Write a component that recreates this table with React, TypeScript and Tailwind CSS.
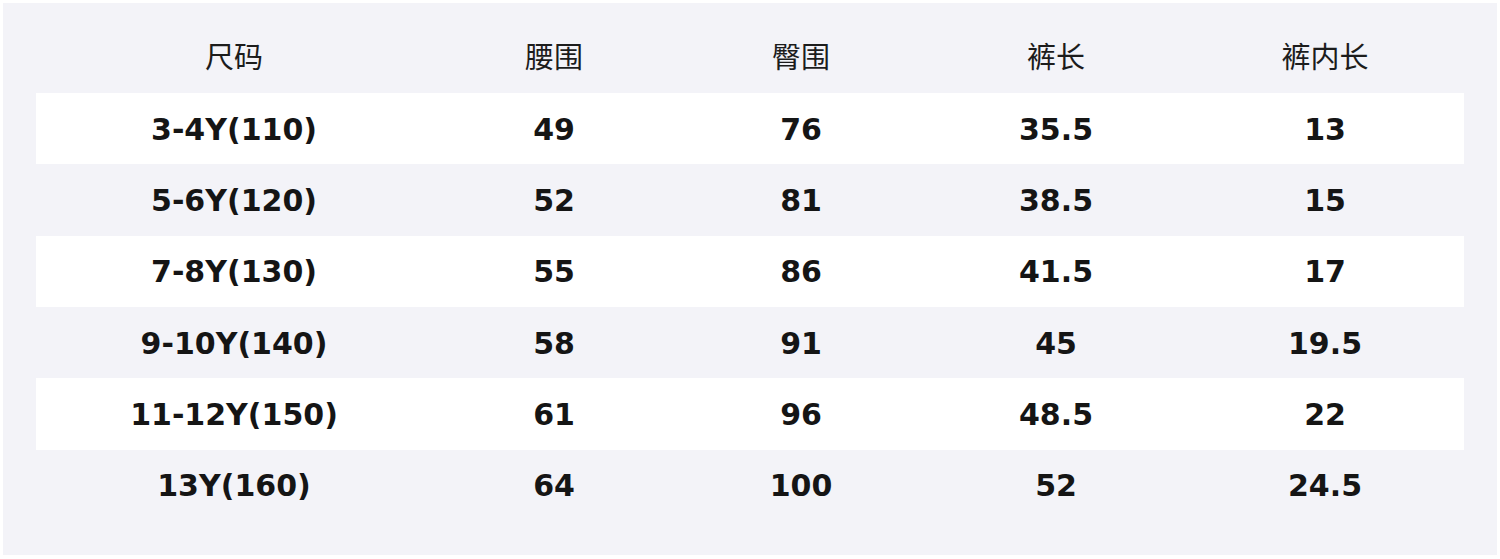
const headers = ["尺码", "腰围", "臀围", "裤长", "裤内长"];

const rows = [
  ["3-4Y(110)", "49", "76", "35.5", "13"],
  ["5-6Y(120)", "52", "81", "38.5", "15"],
  ["7-8Y(130)", "55", "86", "41.5", "17"],
  ["9-10Y(140)", "58", "91", "45", "19.5"],
  ["11-12Y(150)", "61", "96", "48.5", "22"],
  ["13Y(160)", "64", "100", "52", "24.5"],
];

const cols = "grid grid-cols-[396px_244px_250px_260px_278px]";

export default function App() {
  return (
    <div className="w-[1500px] h-[559px] bg-white pt-[3px] pl-[3px] pr-[3px] pb-[4px]">
      <div className="h-full bg-[#f3f3f8] px-[33px] pb-[36px]">
        <div
          className={`${cols} h-[90px] items-center pt-[14px] text-[29px] text-[#1c1c1c]`}
          style={{ fontFamily: '"Noto Sans CJK SC", "Noto Sans", sans-serif' }}
        >
          {headers.map((h) => (
            <div key={h} className="text-center leading-none">
              {h}
            </div>
          ))}
        </div>
        {rows.map((row, i) => (
          <div
            key={row[0]}
            className={`${cols} h-[71.33px] items-center pt-[2px] text-[30px] font-bold text-[#151515] ${
              i % 2 === 0 ? "bg-white" : ""
            }`}
            style={{ fontFamily: '"DejaVu Sans", "Liberation Sans", sans-serif' }}
          >
            {row.map((cell, j) => (
              <div key={j} className="text-center leading-none">
                {cell}
              </div>
            ))}
          </div>
        ))}
      </div>
    </div>
  );
}
